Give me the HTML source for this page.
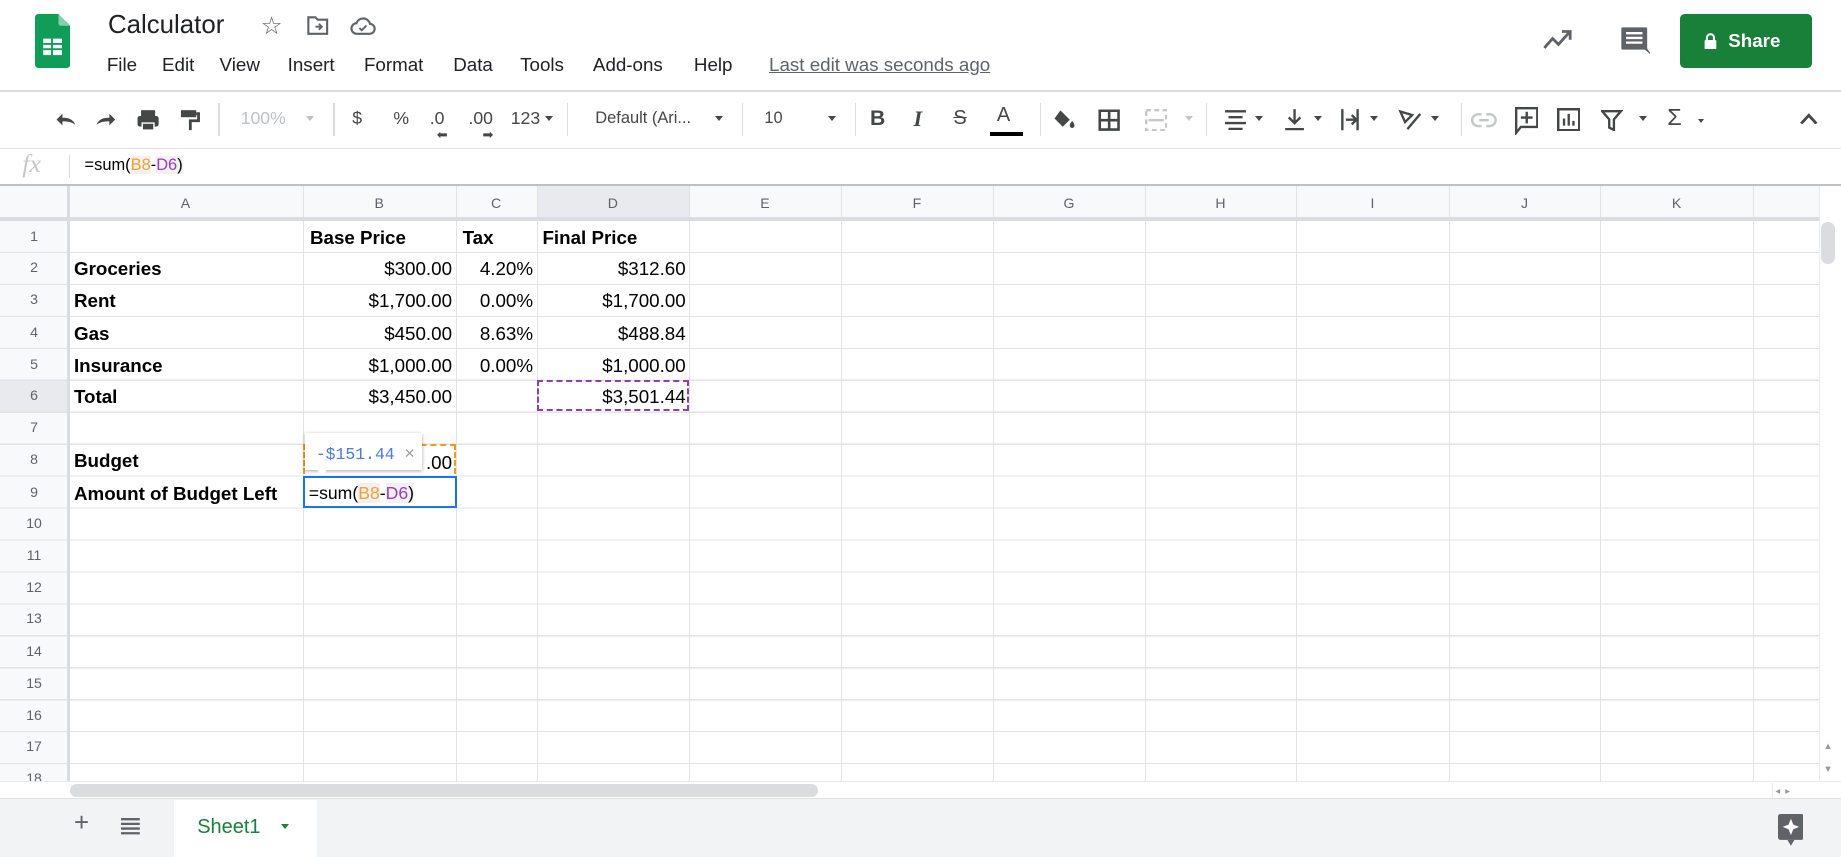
<!DOCTYPE html>
<html><head><meta charset="utf-8">
<style>
html,body{margin:0;padding:0;background:#fff;overflow:hidden}
body{width:1841px;height:857px}
#w{zoom:1.17411;position:relative;width:1568px;height:730px;font-family:"Liberation Sans",Arial,sans-serif;color:#202124;overflow:hidden}
.a{position:absolute}
.menu span{position:absolute;top:46px;font-size:16px;color:#202124}
.tb{position:absolute;top:92px;font-size:15px;color:#444746}
.sep{position:absolute;top:88px;width:1px;height:28px;background:#dadce0}
.dd{position:absolute;top:99px;width:0;height:0;border-left:4px solid transparent;border-right:4px solid transparent;border-top:5px solid #444746}
.ch{position:absolute;top:158px;height:29px;line-height:29px;text-align:center;font-size:12px;color:#5f6368}
.rh{position:absolute;left:0;width:58px;text-align:center;font-size:12px;color:#5f6368;height:27px;line-height:27px}
.c{position:absolute;font-size:16px;height:27px;line-height:29px;white-space:nowrap;color:#000}
.b{font-weight:bold}
.r{text-align:right}
.vl{position:absolute;top:158px;width:1px;height:507px;background:#e2e3e3}
.hl{position:absolute;left:0;width:1549px;height:1px;background:#e2e3e3}
</style></head><body><div id="w">
<!-- logo -->
<svg class="a" style="left:30px;top:12px" width="30" height="46" viewBox="0 0 30 46"><path d="M3 0h17l10 10v33a3 3 0 0 1-3 3H3a3 3 0 0 1-3-3V3a3 3 0 0 1 3-3z" fill="#0f9d58"/><path d="M20 0l10 10H22a2 2 0 0 1-2-2z" fill="#87ceac"/><rect x="7" y="21" width="16" height="14" fill="#fff"/><path d="M7 25.5h16M7 30h16M14.5 21v14" stroke="#0f9d58" stroke-width="1.6"/></svg>
<div class="a" style="left:92px;top:9px;font-size:22px;color:#202124">Calculator</div>
<div class="a" style="left:222px;top:9px;font-size:21px;color:#5f6368">☆</div>
<svg class="a" style="left:261px;top:13px" width="20" height="18" viewBox="0 0 20 18"><path d="M2 2h6l2 2h8v12H2z" fill="none" stroke="#5f6368" stroke-width="1.8"/><path d="M8 10h5M11 7.5l2.5 2.5L11 12.5" fill="none" stroke="#5f6368" stroke-width="1.6"/></svg>
<svg class="a" style="left:298px;top:13px" width="22" height="18" viewBox="0 0 22 18"><path d="M6 16a4.5 4.5 0 0 1-.5-9A6 6 0 0 1 17 7.5a4 4 0 0 1-.5 8.5z" fill="none" stroke="#5f6368" stroke-width="1.8"/><path d="M8 11l2 2 4-4" fill="none" stroke="#5f6368" stroke-width="1.6"/></svg>
<div class="menu"><span style="left:91px">File</span><span style="left:138px">Edit</span><span style="left:187px">View</span><span style="left:245px">Insert</span><span style="left:310px">Format</span><span style="left:386px">Data</span><span style="left:443px">Tools</span><span style="left:505px">Add-ons</span><span style="left:591px">Help</span><span style="left:655px;color:#5f6368;text-decoration:underline">Last edit was seconds ago</span></div>
<svg class="a" style="left:1313px;top:24px" width="28" height="20" viewBox="0 0 28 20"><path d="M2 17l7-8 5 5 9-10" fill="none" stroke="#5f6368" stroke-width="2.4"/><path d="M17 3h7v7" fill="none" stroke="#5f6368" stroke-width="2.4"/></svg>
<svg class="a" style="left:1379px;top:21px" width="26" height="28" viewBox="0 0 26 28"><path d="M3 2h20a1 1 0 0 1 1 1v17l4 6-6-5H3a1 1 0 0 1-1-1V3a1 1 0 0 1 1-1z" fill="#5f6368"/><path d="M6 7h14M6 11h14M6 15h14" stroke="#fff" stroke-width="2"/></svg>
<div class="a" style="left:1431px;top:12px;width:112px;height:46px;background:#188038;border-radius:4px;color:#fff;font-weight:bold;font-size:16px;line-height:46px"><svg style="position:absolute;left:20px;top:16px" width="11" height="14" viewBox="0 0 11 14"><path d="M2.5 6V4a3 3 0 0 1 6 0v2" fill="none" stroke="#fff" stroke-width="1.8"/><rect x="0.5" y="6" width="10" height="8" rx="1" fill="#fff"/></svg><span style="position:absolute;left:41px">Share</span></div>
<div class="a" style="left:0;top:77px;width:1568px;height:1px;background:#dadce0"></div>
<!-- toolbar -->
<svg class="a" style="left:45px;top:93px" width="130" height="20" viewBox="0 0 130 20"><path d="M3 9l5-5v3.5c5 0 9 1 11 6-3-2.5-6-3-11-3V14z" fill="#444746"/><path d="M53 9l-5-5v3.5c-5 0-9 1-11 6 3-2.5 6-3 11-3V14z" fill="#444746"/><rect x="75" y="1" width="12" height="5" fill="#444746"/><rect x="72" y="6" width="18" height="9" rx="2" fill="#444746"/><rect x="76" y="12" width="10" height="6" fill="#444746" stroke="#fff" stroke-width="1.2"/><rect x="109" y="1" width="13" height="6" fill="#444746"/><path d="M122 4h2v6h-7v8" fill="none" stroke="#444746" stroke-width="2.4"/></svg>
<div class="sep" style="left:186px"></div>
<div class="tb" style="left:205px;color:#bdc1c6">100%</div><div class="dd" style="left:261px;border-top-color:#bdc1c6"></div>
<div class="sep" style="left:284px"></div>
<div class="tb" style="left:300px">$</div><div class="tb" style="left:335px">%</div>
<div class="tb" style="left:366px">.0</div><div class="a" style="left:372px;top:108px;font-size:11px;color:#444746">⬅</div>
<div class="tb" style="left:399px">.00</div><div class="a" style="left:411px;top:108px;font-size:11px;color:#444746">➡</div>
<div class="tb" style="left:435px">123</div><div class="dd" style="left:464px"></div>
<div class="sep" style="left:483px"></div>
<div class="tb" style="left:507px;font-size:14px;top:93px">Default (Ari...</div><div class="dd" style="left:609px"></div>
<div class="sep" style="left:632px"></div>
<div class="tb" style="left:651px;font-size:14px;top:93px">10</div><div class="dd" style="left:705px"></div>
<div class="sep" style="left:728px"></div>
<div class="tb" style="left:741px;font-weight:bold;font-size:18px;top:91px">B</div>
<div class="tb" style="left:778px;font-style:italic;font-size:19px;top:90px;font-family:'Liberation Serif',serif;font-weight:bold">I</div>
<div class="tb" style="left:812px;text-decoration:line-through;font-size:17px;top:91px">S</div>
<div class="tb" style="left:849px;font-size:17px;top:89px">A</div><div class="a" style="left:843px;top:112px;width:28px;height:4px;background:#000"></div>
<div class="sep" style="left:886px"></div>
<svg class="a" style="left:895px;top:92px" width="24" height="20" viewBox="0 0 24 20"><path d="M8 2l8 8-6 6-7-7z" fill="#444746"/><path d="M18 11c1.5 2 2 3 2 4a2 2 0 0 1-4 0c0-1 .5-2 2-4z" fill="#444746"/></svg>
<svg class="a" style="left:935px;top:93px" width="19" height="19" viewBox="0 0 19 19"><path d="M1.5 1.5h16v16h-16zM9.5 1.5v16M1.5 9.5h16" fill="none" stroke="#444746" stroke-width="2.2"/></svg>
<svg class="a" style="left:975px;top:93px" width="19" height="19" viewBox="0 0 19 19"><path d="M1 1h17v17H1z" fill="none" stroke="#c4c7c5" stroke-width="2" stroke-dasharray="4 3"/><path d="M3 9.5h13" stroke="#c4c7c5" stroke-width="2"/></svg><div class="dd" style="left:1009px;border-top-color:#c4c7c5"></div>
<div class="sep" style="left:1027px"></div>
<svg class="a" style="left:1043px;top:93px" width="18" height="18" viewBox="0 0 18 18"><path d="M0 2h18M3 7h12M0 12h18M3 17h12" stroke="#444746" stroke-width="2"/></svg><div class="dd" style="left:1069px"></div>
<svg class="a" style="left:1094px;top:92px" width="18" height="20" viewBox="0 0 18 20"><path d="M9 1v12M4 8l5 5 5-5M1 18h16" fill="none" stroke="#444746" stroke-width="2"/></svg><div class="dd" style="left:1119px"></div>
<svg class="a" style="left:1141px;top:92px" width="20" height="20" viewBox="0 0 20 20"><path d="M2 1v18M15 1v18M5 10h8M10 6l4 4-4 4" fill="none" stroke="#444746" stroke-width="2"/></svg><div class="dd" style="left:1167px"></div>
<svg class="a" style="left:1191px;top:92px" width="22" height="20" viewBox="0 0 22 20"><path d="M2 3l10 3-6 6zM8 18L19 5" fill="none" stroke="#444746" stroke-width="2"/></svg><div class="dd" style="left:1219px"></div>
<div class="sep" style="left:1244px"></div>
<svg class="a" style="left:1253px;top:95px" width="22" height="14" viewBox="0 0 22 14"><path d="M9 2H6a5 5 0 0 0 0 10h3M13 2h3a5 5 0 0 1 0 10h-3M7 7h8" fill="none" stroke="#c4c7c5" stroke-width="2"/></svg>
<svg class="a" style="left:1290px;top:91px" width="20" height="24" viewBox="0 0 20 24"><path d="M1 1h18v16H5l-4 5z" fill="none" stroke="#444746" stroke-width="2"/><path d="M10 4v10M5 9h10" stroke="#444746" stroke-width="2"/></svg>
<svg class="a" style="left:1326px;top:92px" width="20" height="20" viewBox="0 0 20 20"><path d="M1 1h18v18H1z" fill="none" stroke="#444746" stroke-width="2.2"/><path d="M6 15V9M10 15V5M14 15v-4" stroke="#444746" stroke-width="2"/></svg>
<svg class="a" style="left:1364px;top:94px" width="18" height="18" viewBox="0 0 18 18"><path d="M1 1h16l-6 7v9l-4-2V8z" fill="none" stroke="#444746" stroke-width="2"/></svg><div class="dd" style="left:1396px"></div>
<div class="tb" style="left:1420px;font-size:20px;top:89px">Σ</div><div class="dd" style="left:1446px;border-top-width:4px;border-left-width:3px;border-right-width:3px;top:101px"></div>
<svg class="a" style="left:1533px;top:96px" width="15" height="10" viewBox="0 0 15 10"><path d="M1 9l6.5-7L14 9" fill="none" stroke="#444746" stroke-width="2.4"/></svg>
<div class="a" style="left:0;top:126px;width:1568px;height:1px;background:#e0e0e0"></div>
<!-- formula bar -->
<div class="a" style="left:19px;top:127px;font-family:'Liberation Serif',serif;font-style:italic;font-size:22px;color:#c4c7c5">fx</div>
<div class="a" style="left:59px;top:132px;width:1px;height:20px;background:#dadce0"></div>
<div class="a" style="left:72px;top:133px;font-size:14px;color:#000;font-family:'Liberation Sans',sans-serif">=sum(<span style="color:#f4a032;background:#f1f1f1">B8</span>-<span style="color:#9c3dbd;background:#f1f1f1">D6</span><span style="background:#f1f1f1">)</span></div>
<div class="a" style="left:0;top:157px;width:1568px;height:1px;background:#c0c0c0"></div>
<!-- headers -->
<div class="a" style="left:0;top:158px;width:1549px;height:29px;background:#f8f9fa"></div>
<div class="a" style="left:0;top:158px;width:58px;height:507px;background:#f8f9fa"></div>
<div class="a" style="left:457px;top:158px;width:130px;height:29px;background:#e8eaed"></div>
<div class="a" style="left:0;top:324px;width:58px;height:27px;background:#e8eaed"></div>
<div class="ch" style="left:58px;width:200px">A</div><div class="ch" style="left:258px;width:130px">B</div><div class="ch" style="left:388px;width:69px">C</div><div class="ch" style="left:457px;width:130px">D</div><div class="ch" style="left:587px;width:129px">E</div><div class="ch" style="left:716px;width:130px">F</div><div class="ch" style="left:846px;width:129px">G</div><div class="ch" style="left:975px;width:129px">H</div><div class="ch" style="left:1104px;width:130px">I</div><div class="ch" style="left:1234px;width:129px">J</div><div class="ch" style="left:1363px;width:130px">K</div>
<!-- grid lines -->
<div class="vl" style="left:258px"></div><div class="vl" style="left:388px"></div><div class="vl" style="left:457px"></div><div class="vl" style="left:587px"></div><div class="vl" style="left:716px"></div><div class="vl" style="left:846px"></div><div class="vl" style="left:975px"></div><div class="vl" style="left:1104px"></div><div class="vl" style="left:1234px"></div><div class="vl" style="left:1363px"></div><div class="vl" style="left:1493px"></div>
<div class="a" style="left:0;top:215px;width:1549px;height:450px;background:repeating-linear-gradient(to bottom,#e2e3e3 0,#e2e3e3 1px,transparent 1px,transparent 27.2px)"></div>
<div class="a" style="left:0;top:185px;width:1549px;height:3px;background:#dadce0"></div>
<div class="a" style="left:57px;top:158px;width:3px;height:507px;background:#dadce0"></div>
<div class="a" style="left:0;top:158px;width:57px;height:27px;background:#f8f9fa"></div>
<!-- row headers -->
<div class="rh" style="top:188px">1</div><div class="rh" style="top:215px">2</div><div class="rh" style="top:242px">3</div><div class="rh" style="top:270px">4</div><div class="rh" style="top:297px">5</div><div class="rh" style="top:324px">6</div><div class="rh" style="top:351px">7</div><div class="rh" style="top:378px">8</div><div class="rh" style="top:406px">9</div><div class="rh" style="top:433px">10</div><div class="rh" style="top:460px">11</div><div class="rh" style="top:487px">12</div><div class="rh" style="top:514px">13</div><div class="rh" style="top:542px">14</div><div class="rh" style="top:569px">15</div><div class="rh" style="top:596px">16</div><div class="rh" style="top:623px">17</div><div class="rh" style="top:650px;height:15px;overflow:hidden">18</div>
<!-- cells -->
<div class="c b" style="left:264px;top:188px">Base Price</div><div class="c b" style="left:394px;top:188px">Tax</div><div class="c b" style="left:462px;top:188px">Final Price</div>
<div class="c b" style="left:63px;top:215px">Groceries</div><div class="c b" style="left:63px;top:242px">Rent</div><div class="c b" style="left:63px;top:270px">Gas</div><div class="c b" style="left:63px;top:297px">Insurance</div><div class="c b" style="left:63px;top:324px">Total</div><div class="c b" style="left:63px;top:378px">Budget</div><div class="c b" style="left:63px;top:406px">Amount of Budget Left</div>
<div class="c r" style="right:1183px;top:215px">$300.00</div><div class="c r" style="right:1183px;top:242px">$1,700.00</div><div class="c r" style="right:1183px;top:270px">$450.00</div><div class="c r" style="right:1183px;top:297px">$1,000.00</div><div class="c r" style="right:1183px;top:324px">$3,450.00</div>
<div class="c r" style="right:1114px;top:215px">4.20%</div><div class="c r" style="right:1114px;top:242px">0.00%</div><div class="c r" style="right:1114px;top:270px">8.63%</div><div class="c r" style="right:1114px;top:297px">0.00%</div>
<div class="c r" style="right:984px;top:215px">$312.60</div><div class="c r" style="right:984px;top:242px">$1,700.00</div><div class="c r" style="right:984px;top:270px">$488.84</div><div class="c r" style="right:984px;top:297px">$1,000.00</div><div class="c r" style="right:984px;top:324px">$3,501.44</div>
<div class="a" style="left:457px;top:324px;width:126px;height:23px;border:2px dashed #8e3fa8"></div>
<div class="a" style="left:258px;top:378px;width:127px;height:24px;border:2px dashed #f29a1f;border-bottom:none"></div>
<div class="c r" style="right:1183px;top:380px">.00</div>
<div class="a" style="left:258px;top:405px;width:128px;height:24px;border:2px solid #1a73e8;background:#fff"></div>
<div class="a" style="left:263px;top:411px;font-size:15px;color:#000">=sum(<span style="color:#f4a032;background:#f1f1f1">B8</span>-<span style="color:#9c3dbd;background:#f1f1f1">D6</span><span style="background:#f1f1f1">)</span></div>
<div class="a" style="left:260px;top:369px;width:99px;height:31px;background:#fff;box-shadow:0 1px 3px rgba(0,0,0,.35)"></div>
<div class="a" style="left:268px;top:398px;width:0;height:0;border-left:6px solid transparent;border-right:6px solid transparent;border-top:8px solid #fff"></div>
<div class="a" style="left:269px;top:377px;font-family:'Liberation Mono',monospace;font-size:14px;color:#4a7bd8">-$151.44 <span style="color:#9aa0a6;font-family:'Liberation Sans',sans-serif;font-size:15px">×</span></div>
<!-- scrollbars -->
<div class="a" style="left:1549px;top:158px;width:19px;height:507px;background:#fff;border-left:1px solid #e8eaed"></div>
<div class="a" style="left:1551px;top:189px;width:12px;height:36px;border-radius:6px;background:#dadce0"></div>
<div class="a" style="left:1553px;top:630px;font-size:8px;color:#999">▲</div><div class="a" style="left:1553px;top:650px;font-size:8px;color:#999">▼</div>
<div class="a" style="left:0;top:665px;width:1568px;height:15px;background:#fff;border-top:1px solid #e8eaed"></div>
<div class="a" style="left:60px;top:668px;width:637px;height:11px;border-radius:6px;background:#dadce0"></div>
<div class="a" style="left:1509px;top:667px;width:38px;height:13px;border-left:1px solid #e8eaed;font-size:8px;color:#999;line-height:13px">&nbsp;◂ &nbsp;▸</div>
<!-- bottom bar -->
<div class="a" style="left:0;top:680px;width:1568px;height:50px;background:#f1f3f4;border-top:1px solid #e0e0e0"></div>
<div class="a" style="left:63px;top:689px;font-size:22px;color:#5f6368">+</div>
<svg class="a" style="left:103px;top:697px" width="16" height="14" viewBox="0 0 16 14"><path d="M0 1h16M0 5h16M0 9h16M0 13h16" stroke="#5f6368" stroke-width="2"/></svg>
<div class="a" style="left:148px;top:681px;width:122px;height:49px;background:#fff"></div>
<div class="a" style="left:168px;top:695px;font-size:17px;color:#188038">Sheet1</div>
<div class="a" style="left:239px;top:702px;width:0;height:0;border-left:4px solid transparent;border-right:4px solid transparent;border-top:5px solid #188038"></div>
<svg class="a" style="left:1514px;top:693px" width="22" height="28" viewBox="0 0 22 28"><rect x="0" y="0" width="22" height="22" rx="2" fill="#5f6368"/><path d="M8 22l3 5 3-5z" fill="#5f6368"/><path d="M11 4l2 5 5 2-5 2-2 5-2-5-5-2 5-2z" fill="#fff"/></svg>
</div></body></html>
